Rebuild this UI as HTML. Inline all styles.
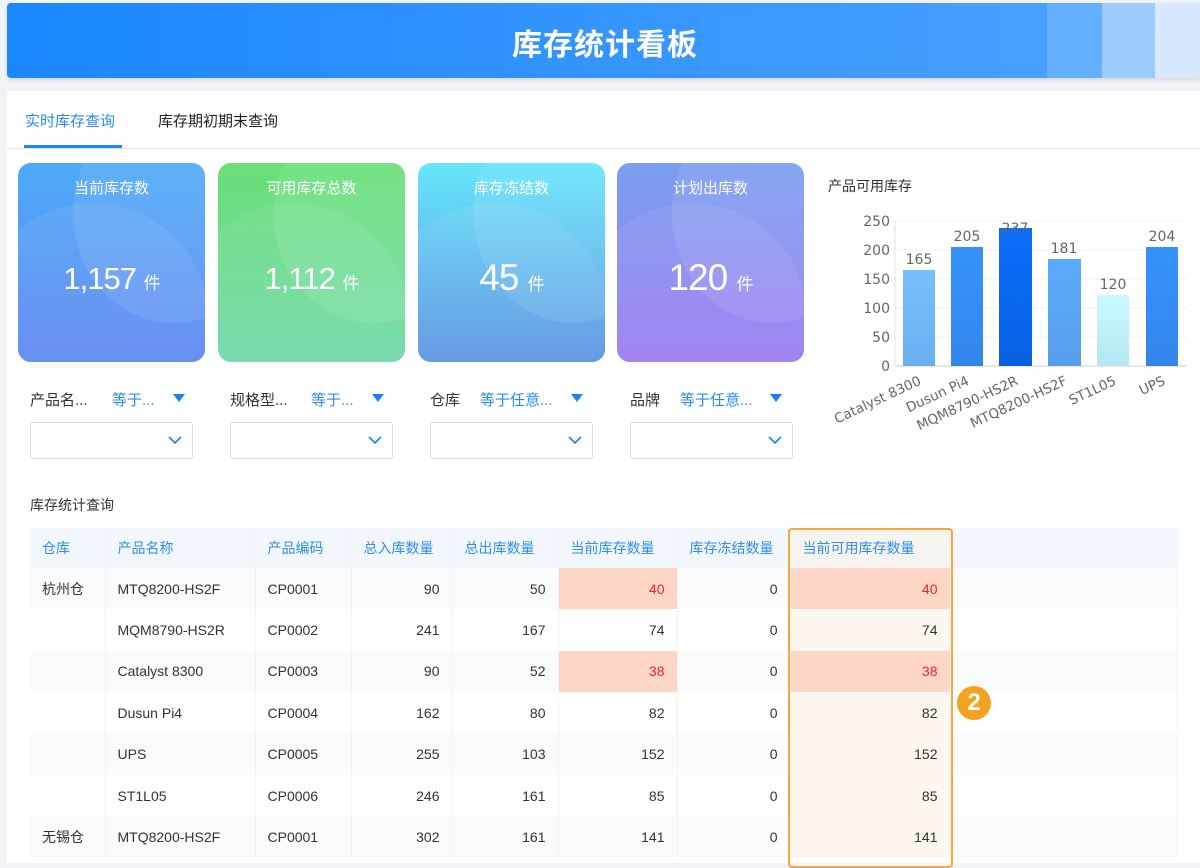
<!DOCTYPE html>
<html><head><meta charset="utf-8"><style>
*{margin:0;padding:0;box-sizing:border-box}
body{width:1200px;height:863px;background:#f1f3f7;font-family:"Liberation Sans","Noto Sans CJK SC",sans-serif;position:relative;overflow:hidden;color:#333}
.abs{position:absolute}
.hdr{left:7px;top:3px;width:1193px;height:75px;background:linear-gradient(90deg,#1b87ff,#4ea3ff);border-radius:4px 0 0 4px;box-shadow:0 2px 4px rgba(0,0,0,.12)}
.main{left:7px;top:91px;width:1193px;height:772px;background:#fff}
.card{top:163px;width:187px;height:199px;border-radius:13px;color:#fff;text-align:center;overflow:hidden}
.card .t{position:absolute;top:14px;width:100%;font-size:15px}
.card .n{position:absolute;top:98px;width:100%;font-size:31px;letter-spacing:-1px}
.card .n small{font-size:17px}
.card .c1{position:absolute;left:-40px;top:40px;width:230px;height:230px;border-radius:50%;background:rgba(255,255,255,.07)}
.card .c2{position:absolute;left:55px;top:-60px;width:200px;height:220px;border-radius:50%;background:rgba(255,255,255,.09)}
.flab{top:389px;font-size:15px;color:#333}
.fop{top:389px;font-size:15px;color:#2a8bf5}
.tri{top:394px;width:0;height:0;border-left:6px solid transparent;border-right:6px solid transparent;border-top:8px solid #1a80f5}
.sel{top:422px;width:163px;height:37px;border:1px solid #d9dce2;border-radius:3px;background:#fff}
.sel svg{position:absolute;right:10px;top:12px}
table{position:absolute;left:30px;top:528px;border-collapse:collapse;font-size:14px}
td,th{height:41.4px;padding:0 12px;font-weight:normal;border-right:1px solid #f0f2f5}
th{background:#f2f7fd;color:#2f8df3;text-align:left;height:40px}
td.r,th.r{text-align:right}
tr:nth-child(even) td{background:#fafbfd}
tr:nth-child(odd) td{background:#fff}
td.av{background:#fdf7ef!important}
td.hl{background:#fdd6c5!important;color:#f5222d}
</style></head><body>
<div class="abs hdr"></div>
<div class="abs" style="left:1047px;top:3px;width:55px;height:75px;background:#64afff"></div>
<div class="abs" style="left:1102px;top:3px;width:53px;height:75px;background:#9bcbff"></div>
<div class="abs" style="left:1155px;top:3px;width:45px;height:75px;background:#d8e8ff"></div>
<div class="abs" style="left:0;top:20px;width:1210px;text-align:center;color:#fff;font-size:30px;font-weight:bold;letter-spacing:1px">库存统计看板</div>
<div class="abs main"></div>
<div class="abs" style="left:25px;top:110px;font-size:15px;color:#2a8bf5">实时库存查询</div>
<div class="abs" style="left:158px;top:110px;font-size:15px;color:#222">库存期初期末查询</div>
<div class="abs" style="left:7px;top:148px;width:1193px;height:1px;background:#e4e6ea"></div>
<div class="abs" style="left:24px;top:145px;width:98px;height:3px;background:#1a86ff"></div>

<div class="abs card" style="left:18px;background:linear-gradient(180deg,#4eaaf8,#5e86f2)"><div class="c1"></div><div class="c2"></div><div class="t">当前库存数</div><div class="n">1,157 <small>件</small></div></div>
<div class="abs card" style="left:218px;background:linear-gradient(180deg,#6adf78,#6fd9a8)"><div class="c1"></div><div class="c2"></div><div class="t">可用库存总数</div><div class="n">1,112 <small>件</small></div></div>
<div class="abs card" style="left:418px;background:linear-gradient(180deg,#66e6fb,#5b92e2)"><div class="c1"></div><div class="c2"></div><div class="t">库存冻结数</div><div class="n" style="font-size:37px;top:94px">45 <small>件</small></div></div>
<div class="abs card" style="left:617px;background:linear-gradient(180deg,#7a9ff0,#9a7af0)"><div class="c1"></div><div class="c2"></div><div class="t">计划出库数</div><div class="n" style="font-size:37px;top:94px">120 <small>件</small></div></div>

<div class="abs flab" style="left:30px">产品名...</div><div class="abs fop" style="left:112px">等于...</div><div class="abs tri" style="left:173px"></div>
<div class="abs flab" style="left:230px">规格型...</div><div class="abs fop" style="left:311px">等于...</div><div class="abs tri" style="left:372px"></div>
<div class="abs flab" style="left:430px">仓库</div><div class="abs fop" style="left:480px">等于任意...</div><div class="abs tri" style="left:571px"></div>
<div class="abs flab" style="left:630px">品牌</div><div class="abs fop" style="left:680px">等于任意...</div><div class="abs tri" style="left:770px"></div>
<div class="abs sel" style="left:30px"><svg width="14" height="10"><path d="M1 2l6 6 6-6" stroke="#1a80f5" stroke-width="1.6" fill="none"/></svg></div>
<div class="abs sel" style="left:230px"><svg width="14" height="10"><path d="M1 2l6 6 6-6" stroke="#1a80f5" stroke-width="1.6" fill="none"/></svg></div>
<div class="abs sel" style="left:430px"><svg width="14" height="10"><path d="M1 2l6 6 6-6" stroke="#1a80f5" stroke-width="1.6" fill="none"/></svg></div>
<div class="abs sel" style="left:630px"><svg width="14" height="10"><path d="M1 2l6 6 6-6" stroke="#1a80f5" stroke-width="1.6" fill="none"/></svg></div>

<div class="abs" style="left:828px;top:176px;font-size:14px;color:#333">产品可用库存</div>
<svg class="abs" style="left:810px;top:200px" width="390" height="250" font-family="DejaVu Sans,sans-serif" font-size="13" fill="#666">
<defs>
<linearGradient id="g1" x1="0" y1="0" x2="0" y2="1"><stop offset="0" stop-color="#78c0fc"/><stop offset="1" stop-color="#6aaff0"/></linearGradient>
<linearGradient id="g2" x1="0" y1="0" x2="0" y2="1"><stop offset="0" stop-color="#3593fb"/><stop offset="1" stop-color="#3385ea"/></linearGradient>
<linearGradient id="g3" x1="0" y1="0" x2="0" y2="1"><stop offset="0" stop-color="#0a6ffb"/><stop offset="1" stop-color="#0761e2"/></linearGradient>
<linearGradient id="g4" x1="0" y1="0" x2="0" y2="1"><stop offset="0" stop-color="#5ca9fa"/><stop offset="1" stop-color="#579fec"/></linearGradient>
<linearGradient id="g5" x1="0" y1="0" x2="0" y2="1"><stop offset="0" stop-color="#c8fbfd"/><stop offset="1" stop-color="#b4e6f4"/></linearGradient>
</defs>
<g stroke="#f0f0f0"><line x1="85" y1="21" x2="377" y2="21"/><line x1="85" y1="50" x2="377" y2="50"/><line x1="85" y1="79" x2="377" y2="79"/><line x1="85" y1="108" x2="377" y2="108"/><line x1="85" y1="137" x2="377" y2="137"/></g>
<line x1="85" y1="166" x2="377" y2="166" stroke="#ccc"/>
<line x1="85" y1="21" x2="85" y2="166" stroke="#e0e0e0"/>
<g text-anchor="end" font-size="14"><text x="80" y="26">250</text><text x="80" y="55">200</text><text x="80" y="84">150</text><text x="80" y="113">100</text><text x="80" y="142">50</text><text x="80" y="171">0</text></g>
<rect x="93" y="70" width="32" height="96" fill="url(#g1)"/>
<rect x="141" y="47" width="32" height="119" fill="url(#g2)"/>
<rect x="189" y="28" width="33" height="138" fill="url(#g3)"/>
<rect x="238" y="59" width="33" height="107" fill="url(#g4)"/>
<rect x="287" y="95" width="32" height="71" fill="url(#g5)"/>
<rect x="336" y="47" width="32" height="119" fill="url(#g2)"/>
<g text-anchor="middle" font-size="14"><text x="109" y="64">165</text><text x="157" y="41">205</text><text x="205" y="33">237</text><text x="254" y="53">181</text><text x="303" y="89">120</text><text x="352" y="41">204</text></g>
<g text-anchor="end" font-size="13.5">
<text transform="translate(112,184) rotate(-25)">Catalyst 8300</text>
<text transform="translate(160,184) rotate(-25)">Dusun Pi4</text>
<text transform="translate(209,184) rotate(-25)">MQM8790-HS2R</text>
<text transform="translate(258,184) rotate(-25)">MTQ8200-HS2F</text>
<text transform="translate(307,184) rotate(-25)">ST1L05</text>
<text transform="translate(356,184) rotate(-25)">UPS</text>
</g>
</svg>

<div class="abs" style="left:30px;top:495px;font-size:14px;color:#333">库存统计查询</div>
<table>
<tr><th style="width:75px">仓库</th><th style="width:150px">产品名称</th><th style="width:96px">产品编码</th><th style="width:101px">总入库数量</th><th style="width:106px">总出库数量</th><th style="width:119px">当前库存数量</th><th style="width:113px">库存冻结数量</th><th style="width:160px;background:#f5f4ef">当前可用库存数量</th><th style="width:227px"></th></tr>
<tr><td>杭州仓</td><td>MTQ8200-HS2F</td><td>CP0001</td><td class="r">90</td><td class="r">50</td><td class="r hl">40</td><td class="r">0</td><td class="r hl">40</td><td></td></tr>
<tr><td></td><td>MQM8790-HS2R</td><td>CP0002</td><td class="r">241</td><td class="r">167</td><td class="r">74</td><td class="r">0</td><td class="r av">74</td><td></td></tr>
<tr><td></td><td>Catalyst 8300</td><td>CP0003</td><td class="r">90</td><td class="r">52</td><td class="r hl">38</td><td class="r">0</td><td class="r hl">38</td><td></td></tr>
<tr><td></td><td>Dusun Pi4</td><td>CP0004</td><td class="r">162</td><td class="r">80</td><td class="r">82</td><td class="r">0</td><td class="r av">82</td><td></td></tr>
<tr><td></td><td>UPS</td><td>CP0005</td><td class="r">255</td><td class="r">103</td><td class="r">152</td><td class="r">0</td><td class="r av">152</td><td></td></tr>
<tr><td></td><td>ST1L05</td><td>CP0006</td><td class="r">246</td><td class="r">161</td><td class="r">85</td><td class="r">0</td><td class="r av">85</td><td></td></tr>
<tr><td>无锡仓</td><td>MTQ8200-HS2F</td><td>CP0001</td><td class="r">302</td><td class="r">161</td><td class="r">141</td><td class="r">0</td><td class="r av">141</td><td></td></tr>
</table>
<div class="abs" style="left:788px;top:528px;width:165px;height:340px;border:2px solid #f8a73c;border-radius:4px"></div>
<div class="abs" style="left:957px;top:686px;width:34px;height:34px;border-radius:50%;background:#f6a21e;color:#fff;font-size:24px;font-weight:bold;text-align:center;line-height:34px">2</div>
</body></html>
